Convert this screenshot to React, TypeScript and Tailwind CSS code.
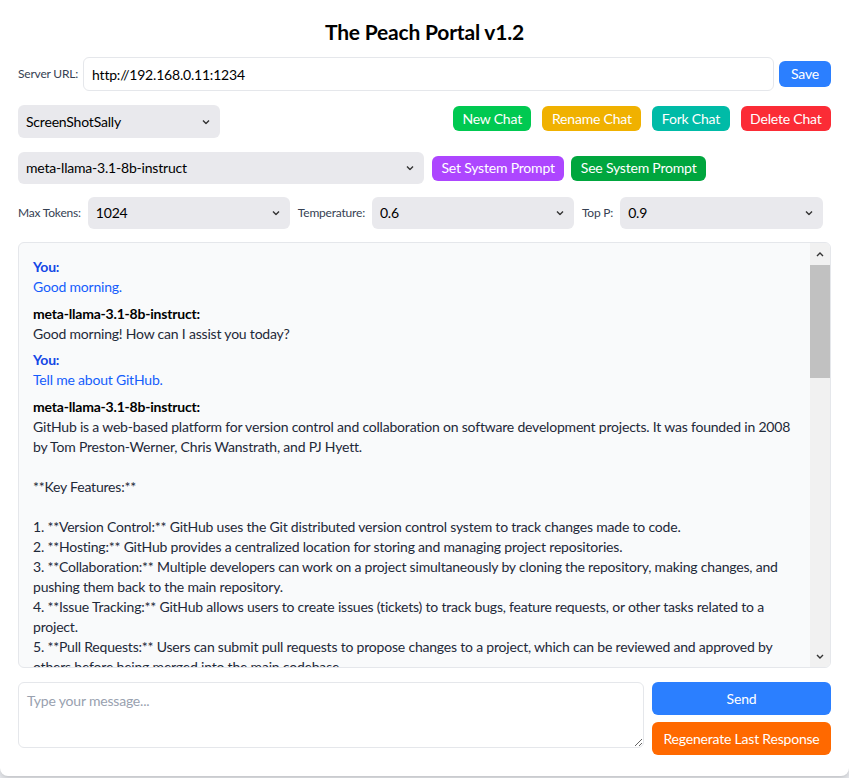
import { useState } from 'react';

const messages = [
  { role: 'user', content: 'Good morning.' },
  { role: 'assistant', content: 'Good morning! How can I assist you today?' },
  { role: 'user', content: 'Tell me about GitHub.' },
  {
    role: 'assistant',
    content:
      'GitHub is a web-based platform for version control and collaboration on software development projects. It was founded in 2008 by Tom Preston-Werner, Chris Wanstrath, and PJ Hyett.\n\n**Key Features:**\n\n1. **Version Control:** GitHub uses the Git distributed version control system to track changes made to code.\n2. **Hosting:** GitHub provides a centralized location for storing and managing project repositories.\n3. **Collaboration:** Multiple developers can work on a project simultaneously by cloning the repository, making changes, and pushing them back to the main repository.\n4. **Issue Tracking:** GitHub allows users to create issues (tickets) to track bugs, feature requests, or other tasks related to a project.\n5. **Pull Requests:** Users can submit pull requests to propose changes to a project, which can be reviewed and approved by others before being merged into the main codebase.\n6. **Code Review:** GitHub provides tools for reviewing code changes and leaving comments.',
  },
];

function Chevron({ className = '' }: { className?: string }) {
  return (
    <svg width="8" height="5" viewBox="0 0 8 5" className={className}>
      <polyline points="1,1 4,4 7,1" fill="none" stroke="#333" strokeWidth="1.4" />
    </svg>
  );
}

function Select({ value, options, className }: { value: string; options: string[]; className: string }) {
  const [val, setVal] = useState(value);
  return (
    <div className={`relative shrink-0 ${className}`}>
      <select
        value={val}
        onChange={(e) => setVal(e.target.value)}
        className="w-full h-full appearance-none bg-[#e9e9ed] rounded-md pl-2 pr-6 text-sm text-black outline-none"
      >
        {options.map((o) => (
          <option key={o} value={o}>
            {o}
          </option>
        ))}
      </select>
      <Chevron className="absolute right-[10px] top-1/2 -translate-y-1/2 pointer-events-none" />
    </div>
  );
}

function Btn({ label, color, className = '' }: { label: string; color: string; className?: string }) {
  return (
    <button className={`${color} text-white text-sm rounded-md px-[9.5px] h-[25px] leading-none whitespace-nowrap ${className}`}>
      {label}
    </button>
  );
}

export default function App() {
  const [url, setUrl] = useState('http://192.168.0.11:1234');
  const [input, setInput] = useState('');

  return (
    <div className="min-h-screen bg-gray-200 font-['Lato',sans-serif] tracking-[-0.2px] text-gray-900">
      <div className="bg-white shadow-md rounded-b-lg px-[18px] pt-[18px] pb-[20px] h-[776px]">
        <h1 className="text-[21px] leading-7 font-bold text-center text-black mb-[11px]">The Peach Portal v1.2</h1>

        <div className="flex items-center mb-[14px]">
          <label className="text-xs text-gray-700 mr-[5px] whitespace-nowrap">Server URL:</label>
          <input
            value={url}
            onChange={(e) => setUrl(e.target.value)}
            className="flex-1 h-[34px] border border-gray-200 rounded-md px-2 text-sm text-black outline-none"
          />
          <button className="ml-[5px] bg-blue-500 text-white text-sm rounded-md px-3 h-[26px]">Save</button>
        </div>

        <div className="flex items-start justify-between mb-[14px]">
          <Select value="ScreenShotSally" options={['ScreenShotSally']} className="w-[202px] h-[33px]" />
          <div className="flex gap-[11px] mt-px">
            <Btn label="New Chat" color="bg-green-500" />
            <Btn label="Rename Chat" color="bg-yellow-500" />
            <Btn label="Fork Chat" color="bg-teal-500" />
            <Btn label="Delete Chat" color="bg-red-500" />
          </div>
        </div>

        <div className="flex items-center mb-[13px]">
          <Select value="meta-llama-3.1-8b-instruct" options={['meta-llama-3.1-8b-instruct']} className="w-[406px] h-[32px]" />
          <Btn label="Set System Prompt" color="bg-purple-500" className="ml-2" />
          <Btn label="See System Prompt" color="bg-green-600" className="ml-[7px]" />
        </div>

        <div className="flex items-center gap-2 mb-[13px]">
          <div className="flex items-center gap-[7px]">
            <label className="text-xs text-gray-700 whitespace-nowrap">Max Tokens:</label>
            <Select value="1024" options={['512', '1024', '2048']} className="w-[202px] h-[32px]" />
          </div>
          <div className="flex items-center gap-[7px]">
            <label className="text-xs text-gray-700 whitespace-nowrap">Temperature:</label>
            <Select value="0.6" options={['0.6']} className="w-[202px] h-[32px]" />
          </div>
          <div className="flex items-center gap-[7px]">
            <label className="text-xs text-gray-700 whitespace-nowrap">Top P:</label>
            <Select value="0.9" options={['0.9']} className="w-[203px] h-[32px]" />
          </div>
        </div>

        <div className="flex h-[426px] border border-gray-200 rounded-md bg-gray-50 overflow-hidden mb-[14px]">
          <div className="flex-1 overflow-hidden pl-[14px] pr-[14px] pt-[14px]">
            {messages.map((m, i) => (
              <div key={i} className="mb-[6.5px] text-sm leading-5">
                <div className={`font-bold ${m.role === 'user' ? 'text-blue-700' : 'text-black'}`}>
                  {m.role === 'user' ? 'You:' : 'meta-llama-3.1-8b-instruct:'}
                </div>
                <div className={`whitespace-pre-wrap ${m.role === 'user' ? 'text-blue-600' : 'text-gray-800'}`}>
                  {m.content}
                </div>
              </div>
            ))}
          </div>
          <div className="w-[20px] bg-[#f1f1f1] flex flex-col">
            <div className="h-[22px] flex items-center justify-center">
              <Chevron className="rotate-180" />
            </div>
            <div className="h-[113px] bg-[#c1c1c1]" />
            <div className="flex-1" />
            <div className="h-[22px] flex items-center justify-center">
              <Chevron />
            </div>
          </div>
        </div>

        <div className="flex gap-2">
          <textarea
            value={input}
            onChange={(e) => setInput(e.target.value)}
            placeholder="Type your message..."
            className="flex-1 h-[66px] border border-gray-200 rounded-md px-2 py-2 text-sm outline-none placeholder:text-gray-400"
          />
          <div className="w-[179px] flex flex-col gap-[7px]">
            <button className="h-[33px] bg-blue-500 text-white text-sm rounded-md">Send</button>
            <button className="h-[33px] bg-orange-500 text-white text-sm rounded-md whitespace-nowrap">Regenerate Last Response</button>
          </div>
        </div>
      </div>
    </div>
  );
}
